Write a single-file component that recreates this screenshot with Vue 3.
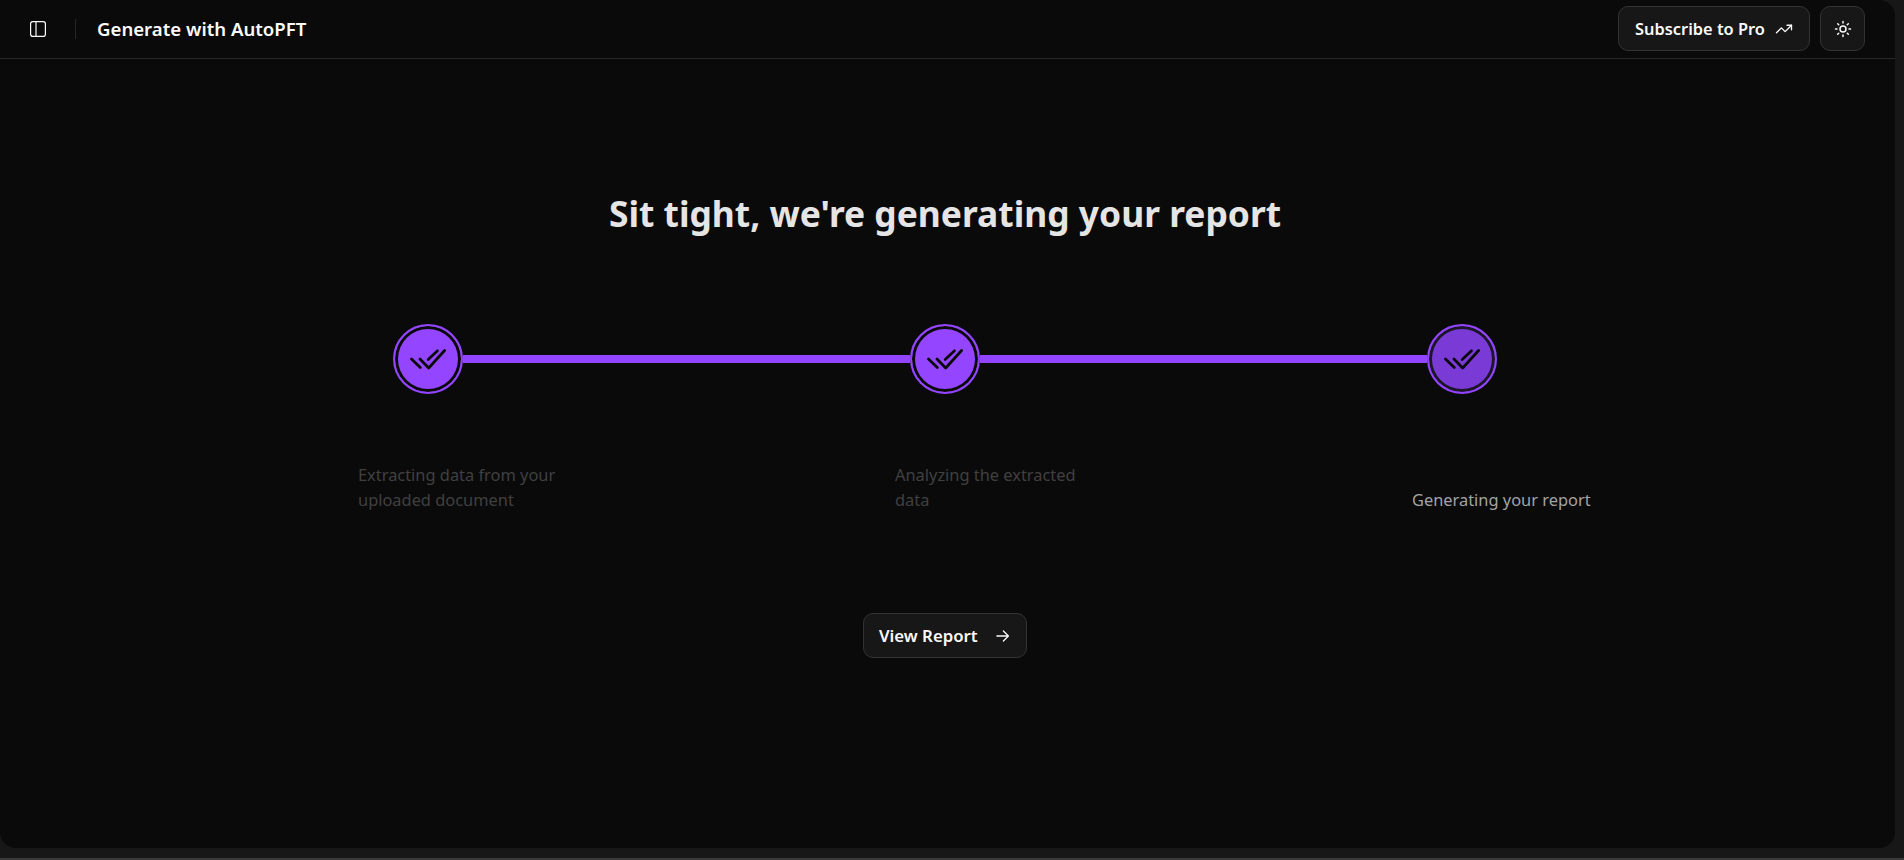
<template>
  <div class="shell">
    <main class="panel">
      <header class="topbar">
        <div class="topbar-left">
          <button class="icon-plain" aria-label="Toggle sidebar">
            <svg width="16" height="16" viewBox="0 0 16 16" fill="none" stroke="currentColor" stroke-width="1.2">
              <rect x="0.6" y="0.6" width="14.8" height="14.8" rx="2.2" />
              <path d="M6 .6v14.8" />
            </svg>
          </button>
          <span class="divider"></span>
          <h1 class="title">Generate with AutoPFT</h1>
        </div>
        <div class="topbar-right">
          <button class="btn btn-pro">
            Subscribe to Pro
            <svg width="18" height="18" viewBox="0 0 24 24" fill="none" stroke="currentColor" stroke-width="1.8" stroke-linecap="round" stroke-linejoin="round">
              <path d="M22 7l-8.5 8.5-5-5L2 17" />
              <path d="M16 7h6v6" />
            </svg>
          </button>
          <button class="btn btn-square" aria-label="Switch theme">
            <svg width="18" height="18" viewBox="0 0 24 24" fill="none" stroke="currentColor" stroke-width="2" stroke-linecap="round">
              <circle cx="12" cy="12" r="4" />
              <path d="M12 2v2M12 20v2M4.9 4.9l1.4 1.4M17.7 17.7l1.4 1.4M2 12h2M20 12h2M6.3 17.7l-1.4 1.4M19.1 4.9l-1.4 1.4" />
            </svg>
          </button>
        </div>
      </header>

      <section class="content">
        <h2 class="heading">Sit tight, we're generating your report</h2>

        <div class="stepper">
          <template v-for="(step, i) in steps" :key="step.text">
            <div class="circle" :class="{ active: step.active }">
              <svg width="36" height="36" viewBox="0 0 36 36" fill="none" stroke="#0a0a0a" stroke-width="2.7" stroke-linecap="round" stroke-linejoin="round">
                <path d="M1.5 18l8.8 8.5" />
                <path d="M10 18l8.7 9L34.6 9.5" />
                <path d="M18.2 18.5l9.3-8.7" />
              </svg>
            </div>
            <div v-if="i < steps.length - 1" class="line"></div>
          </template>
        </div>

        <div class="labels">
          <p v-for="step in steps" :key="step.text" class="label" :class="{ current: step.active }">{{ step.text }}</p>
        </div>

        <button class="btn btn-report">
          View Report
          <svg width="18" height="18" viewBox="0 0 24 24" fill="none" stroke="currentColor" stroke-width="1.8" stroke-linecap="round" stroke-linejoin="round">
            <path d="M4 12h16M13 5l7 7-7 7" />
          </svg>
        </button>
      </section>
    </main>
  </div>
</template>

<script setup>
const steps = [
  { text: 'Extracting data from your uploaded document', active: false },
  { text: 'Analyzing the extracted data', active: false },
  { text: 'Generating your report', active: true },
]
</script>

<style scoped>
.shell {
  width: 1904px;
  height: 860px;
  background: #171717;
  overflow: hidden;
  border-bottom: 2px solid #3a3a3a;
  box-sizing: border-box;
}

.panel {
  width: 1895px;
  height: 848px;
  background: #0a0a0a;
  border-radius: 0 16px 16px 16px;
  color: #fafafa;
  font-family: "Noto Sans", sans-serif;
}

.topbar {
  height: 59px;
  box-sizing: border-box;
  border-bottom: 1px solid #262626;
  display: flex;
  align-items: center;
  justify-content: space-between;
  padding: 0 30px 1px 30px;
}

.topbar-left,
.topbar-right {
  display: flex;
  align-items: center;
}

.topbar-right {
  gap: 10px;
}

.icon-plain {
  display: flex;
  padding: 0;
  background: none;
  border: 0;
  color: #fafafa;
}

.divider {
  width: 1px;
  height: 20px;
  background: #262626;
  margin: 0 21px 0 29px;
}

.title {
  margin: 0;
  font-size: 18.6px;
  font-weight: 600;
  color: #fafafa;
}

.btn {
  display: inline-flex;
  align-items: center;
  justify-content: center;
  gap: 10px;
  height: 45px;
  padding: 0 15px;
  box-sizing: border-box;
  background: #171717;
  border: 1px solid #333;
  border-radius: 10px;
  color: #fafafa;
  font-family: inherit;
  font-size: 16.4px;
  font-weight: 600;
  white-space: nowrap;
}

.btn-pro {
  width: 192px;
}

.btn-square {
  width: 45px;
  padding: 0;
}

.content {
  display: flex;
  flex-direction: column;
  align-items: center;
  padding-right: 5px;
}

.heading {
  margin: 128px 0 0;
  font-size: 35.4px;
  line-height: 52px;
  font-weight: 700;
  color: #e5e5e5;
}

.stepper {
  display: flex;
  align-items: center;
  margin-top: 85px;
}

.circle {
  width: 70px;
  height: 70px;
  box-sizing: border-box;
  border-radius: 50%;
  background: #9345ff;
  border: 2px solid #9345ff;
  box-shadow: inset 0 0 0 3px #0a0a0a;
  display: flex;
  align-items: center;
  justify-content: center;
}

.circle.active {
  background: #7a3ad6;
  box-shadow: inset 0 0 0 3px #1c1628;
}

.line {
  width: 447px;
  height: 8px;
  background: #9345ff;
}

.labels {
  display: grid;
  grid-template-columns: 537px 517px 200px;
  align-items: end;
  align-self: flex-start;
  margin: 68px 0 0 358px;
}

.label {
  margin: 0;
  max-width: 210px;
  font-size: 16.4px;
  line-height: 25px;
  color: #404040;
}

.label:nth-child(2) {
  max-width: 190px;
}

.label.current {
  color: #a3a3a3;
}

.btn-report {
  margin-top: 101px;
  width: 164px;
  font-size: 16.8px;
  gap: 16px;
}
</style>

<style>
html, body {
  background: #171717;
}
</style>
